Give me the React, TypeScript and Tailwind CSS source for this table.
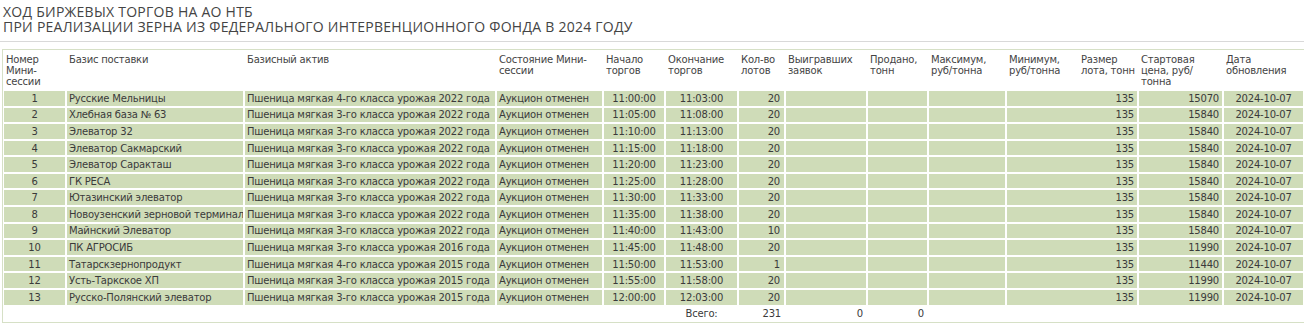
type Session = {
  num: number;
  basis: string;
  asset: string;
  start: string;
  end: string;
  lots: number;
  lotSize: number;
  price: number;
};

const wheat = (cls: string, year: string) => `Пшеница мягкая ${cls}-го класса урожая ${year} года`;

const sessions: Session[] = [
  { num: 1, basis: "Русские Мельницы", asset: wheat("4", "2022"), start: "11:00:00", end: "11:03:00", lots: 20, lotSize: 135, price: 15070 },
  { num: 2, basis: "Хлебная база № 63", asset: wheat("3", "2022"), start: "11:05:00", end: "11:08:00", lots: 20, lotSize: 135, price: 15840 },
  { num: 3, basis: "Элеватор 32", asset: wheat("3", "2022"), start: "11:10:00", end: "11:13:00", lots: 20, lotSize: 135, price: 15840 },
  { num: 4, basis: "Элеватор Сакмарский", asset: wheat("3", "2022"), start: "11:15:00", end: "11:18:00", lots: 20, lotSize: 135, price: 15840 },
  { num: 5, basis: "Элеватор Саракташ", asset: wheat("3", "2022"), start: "11:20:00", end: "11:23:00", lots: 20, lotSize: 135, price: 15840 },
  { num: 6, basis: "ГК РЕСА", asset: wheat("3", "2022"), start: "11:25:00", end: "11:28:00", lots: 20, lotSize: 135, price: 15840 },
  { num: 7, basis: "Ютазинский элеватор", asset: wheat("3", "2022"), start: "11:30:00", end: "11:33:00", lots: 20, lotSize: 135, price: 15840 },
  { num: 8, basis: "Новоузенский зерновой терминал", asset: wheat("3", "2022"), start: "11:35:00", end: "11:38:00", lots: 20, lotSize: 135, price: 15840 },
  { num: 9, basis: "Майнский Элеватор", asset: wheat("3", "2022"), start: "11:40:00", end: "11:43:00", lots: 10, lotSize: 135, price: 15840 },
  { num: 10, basis: "ПК АГРОСИБ", asset: wheat("3", "2016"), start: "11:45:00", end: "11:48:00", lots: 20, lotSize: 135, price: 11990 },
  { num: 11, basis: "Татарскзернопродукт", asset: wheat("4", "2015"), start: "11:50:00", end: "11:53:00", lots: 1, lotSize: 135, price: 11440 },
  { num: 12, basis: "Усть-Таркское ХП", asset: wheat("3", "2015"), start: "11:55:00", end: "11:58:00", lots: 20, lotSize: 135, price: 11990 },
  { num: 13, basis: "Русско-Полянский элеватор", asset: wheat("3", "2015"), start: "12:00:00", end: "12:03:00", lots: 20, lotSize: 135, price: 11990 },
];

// widths of the 14 header columns, px
const colWidths = [63, 178, 252, 107, 62, 73, 47, 82, 61, 78, 72, 60, 85, 81];

const headers: string[][] = [
  ["Номер", "Мини-", "сессии"],
  ["Базис поставки"],
  ["Базисный актив"],
  ["Состояние Мини-", "сессии"],
  ["Начало", "торгов"],
  ["Окончание", "торгов"],
  ["Кол-во", "лотов"],
  ["Выигравших", "заявок"],
  ["Продано,", "тонн"],
  ["Максимум,", "руб/тонна"],
  ["Минимум,", "руб/тонна"],
  ["Размер", "лота, тонн"],
  ["Стартовая", "цена, руб/", "тонна"],
  ["Дата", "обновления"],
];

const td = "border border-white bg-[#cfdcb8] px-[2px] whitespace-nowrap overflow-hidden";

export default function App() {
  const totalLots = sessions.reduce((sum, s) => sum + s.lots, 0);

  return (
    <div className="w-[1304px] overflow-hidden bg-white font-['DejaVu_Sans',Verdana,sans-serif] text-[#3a3a3a]">
      <div className="pt-[4px] pl-[3px] font-['Open_Sans',sans-serif] text-[14px] leading-[15px] tracking-[0.25px] text-[#444]">
        <p>ХОД БИРЖЕВЫХ ТОРГОВ НА АО НТБ</p>
        <p>ПРИ РЕАЛИЗАЦИИ ЗЕРНА ИЗ ФЕДЕРАЛЬНОГО ИНТЕРВЕНЦИОННОГО ФОНДА В 2024 ГОДУ</p>
      </div>

      <div className="mt-[7px] h-px bg-[#d9d9d9]" />

      <div className="mt-[7px] ml-[2px] w-[1302px] border border-r-0 border-[#d6e0c6]">
        <table className="w-[1301px] table-fixed border-separate border-spacing-0 text-[10px] leading-[11px] tracking-[-0.2px]">
          <colgroup>
            {colWidths.map((w, i) => (
              <col key={i} style={{ width: w }} />
            ))}
          </colgroup>
          <thead>
            <tr className="h-[40px] align-top text-left text-[#444]">
              {headers.map((lines, i) => (
                <th key={i} className="border border-white px-[2px] pt-[3px] font-normal">
                  {lines.map((line, j) => (
                    <div key={j} className="whitespace-nowrap">
                      {line}
                    </div>
                  ))}
                </th>
              ))}
            </tr>
          </thead>
          <tbody>
            {sessions.map((s) => (
              <tr key={s.num} className="h-[16.58px]">
                <td className={`${td} text-center`}>{s.num}</td>
                <td className={td}>{s.basis}</td>
                <td className={td}>{s.asset}</td>
                <td className={td}>Аукцион отменен</td>
                <td className={`${td} text-center`}>{s.start}</td>
                <td className={`${td} text-center`}>{s.end}</td>
                <td className={`${td} pr-[4px] text-right`}>{s.lots}</td>
                <td className={td} />
                <td className={td} />
                <td className={td} />
                <td colSpan={2} className={`${td} pr-[3px] text-right`}>
                  {s.lotSize}
                </td>
                <td className={`${td} pr-[3px] text-right`}>{s.price}</td>
                <td className={`${td} text-center`}>2024-10-07</td>
              </tr>
            ))}
            <tr className="h-[16px]">
              <td colSpan={5} />
              <td className="text-center">Всего:</td>
              <td className="pr-[4px] text-right">{totalLots}</td>
              <td className="pr-[4px] text-right">0</td>
              <td className="pr-[4px] text-right">0</td>
              <td colSpan={5} />
            </tr>
          </tbody>
        </table>
      </div>
    </div>
  );
}
